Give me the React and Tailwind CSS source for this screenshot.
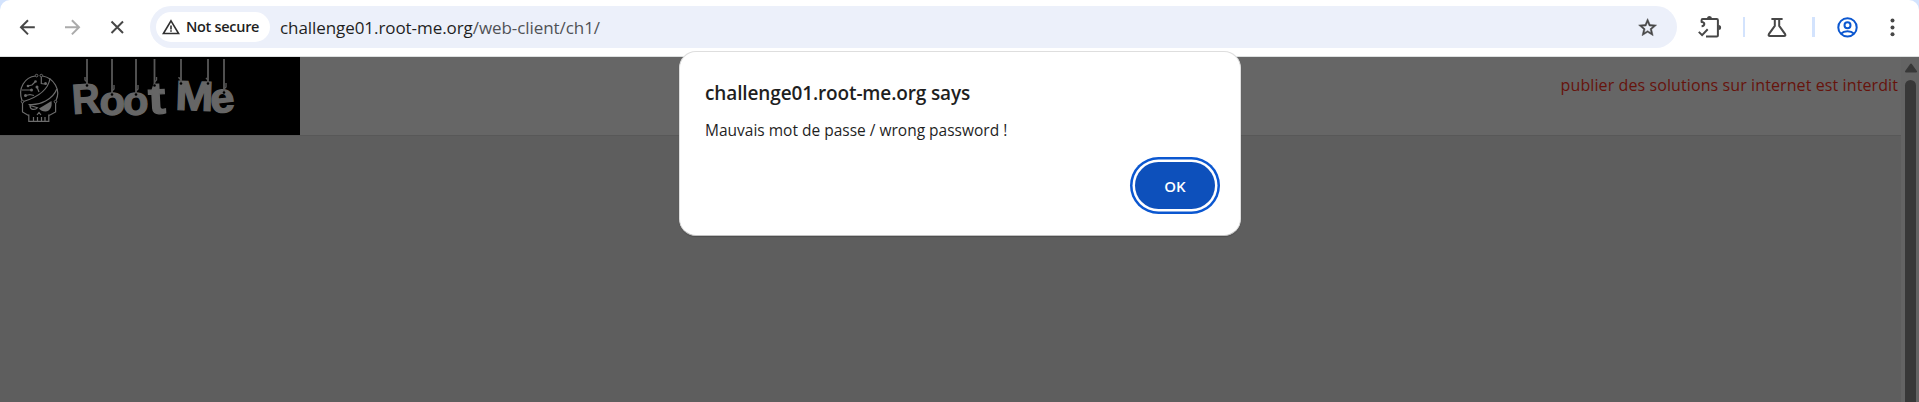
import React from "react";

const ink = "#474747";

function BackIcon() {
  return (
    <svg className="size-6" viewBox="0 0 24 24" fill="none" stroke={ink} strokeWidth="2">
      <path d="M19.8 12.3H6M13 5.200L6 12.300l7 7.100" />
    </svg>
  );
}

function ForwardIcon() {
  return (
    <svg className="size-6" viewBox="0 0 24 24" fill="none" stroke="#ababab" strokeWidth="2">
      <path d="M5 12.300h13.800M11.900 5.200l7.100 7.100-7.100 7.100" />
    </svg>
  );
}

function StopIcon() {
  return (
    <svg className="size-6" viewBox="0 0 24 24" fill="none" stroke={ink} strokeWidth="2">
      <path d="M6.500 6.500l11.500 11.500M18 6.500l-11.500 11.500" />
    </svg>
  );
}

function WarningIcon() {
  return (
    <svg className="h-5 w-[18px]" viewBox="0 0 18 20" fill="none" stroke="#303030" strokeWidth="1.600">
      <path d="M9 3.900L16.600 16.500H1.400z" />
      <path d="M9 8.400v4M9 13.300v1.500" />
    </svg>
  );
}

function StarIcon() {
  return (
    <svg className="size-6" viewBox="0 0 24 24">
      <path
        fill={ink}
        stroke={ink}
        strokeWidth=".5"
        d="M22 9.24l-7.19-.62L12 2 9.19 8.63 2 9.24l5.46 4.73L5.82 21 12 17.27 18.18 21l-1.63-7.03L22 9.24zM12 15.4l-3.76 2.27 1-4.28-3.32-2.88 4.38-.38L12 6.1l1.71 4.04 4.38.38-3.32 2.88 1 4.28L12 15.4z"
        transform="translate(.8 1.800) scale(.9)"
      />
    </svg>
  );
}

function ExtensionsIcon() {
  return (
    <svg className="h-6 w-6" viewBox="0 0 24 24" fill="none" stroke={ink} strokeWidth="2">
      <path d="M3.600 11.200c3.600-.2 3.600-4.100 0-4.300V5.200q0-1.100 1.100-1.100h14.100q1.100 0 1.100 1.100v15.300q0 1.100-1.100 1.100H8" strokeLinejoin="round" />
      <path d="M.8 16.900l3.300 3.200 5.600-5.800" />
      <path d="M9 3.400a2.500 2.500 0 0 1 5 0zM20.600 10.100a2.500 2.500 0 0 1 0 5z" fill={ink} stroke="none" />
    </svg>
  );
}

function LabsIcon() {
  return (
    <svg className="size-6" viewBox="0 0 24 24" fill="none" stroke={ink} strokeWidth="2">
      <path d="M6.400 4.100h11.200M9.800 4.500v6.400L3.900 19.100q-.8 2 1 2h14.200q1.800 0 1-2l-5.900-8.200V4.500" />
    </svg>
  );
}

function ProfileIcon() {
  return (
    <svg className="size-6" viewBox="0 0 24 24" fill="none" stroke="#0b57d0" strokeWidth="2">
      <circle cx="12.500" cy="12.400" r="9.200" />
      <circle cx="12.500" cy="10.300" r="3" />
      <path d="M5.900 18.700c3.400-3.400 9.800-3.400 13.200 0" />
    </svg>
  );
}

function MenuIcon() {
  return (
    <svg className="size-6" viewBox="0 0 24 24" fill={ink}>
      <circle cx="12.500" cy="5.500" r="2" />
      <circle cx="12.500" cy="12.400" r="2" />
      <circle cx="12.500" cy="19.300" r="2" />
    </svg>
  );
}

const strings = [
  [87, 82, 79],
  [112, 91, 87],
  [136, 91, 87],
  [154.5, 82, 79],
  [181, 80, 79],
  [208, 80, 80],
  [224, 89, 85],
];

// glyph, left, baseline, font size, rotation, horizontal stretch
const letters = [
  ["R", 73, 114, 42, -4, 0.92],
  ["o", 99.5, 115, 41, 0, 1.02],
  ["o", 123, 115, 41, 0, 1.02],
  ["t", 149, 114, 45, -3, 1.15],
  ["M", 175, 109.5, 41.5, 2, 1.1],
  ["e", 211.5, 113.5, 42, -6, 1.04],
];

function Logo() {
  return (
    <svg className="h-[78px] w-[300px] bg-black" viewBox="0 57 300 78">
      <g fill="#666" stroke="#666" strokeWidth="1.300" fontFamily="Liberation Sans, sans-serif" fontWeight="700">
        {letters.map(([c, x, y, size, r, sx]) => (
          <text key={x} fontSize={size} transform={`translate(${x} ${y}) rotate(${r}) scale(${sx} 1)`}>
            {c}
          </text>
        ))}
      </g>
      <g stroke="#585858" strokeWidth="1.800" fill="none">
        {strings.map(([x, y]) => (
          <path key={x} d={`M${x} 59V${y + 2}`} />
        ))}
      </g>
      <g stroke="#585858" strokeWidth="1.400" fill="none">
        {strings.map(([x, y, k], i) => {
          const side = [0, 3, 4, 5].includes(i) ? -1 : 1;
          const right = i === 3 ? 1 : side;
          return <path key={x} d={`M${x} ${y}l${right * 2} ${-2}v${k - y}`} />;
        })}
      </g>
      <g fill="#000">
        {strings.map(([x, y]) => (
          <circle key={x} cx={x} cy={y + 3.5} r="1.300" />
        ))}
      </g>
      <g fill="none" stroke="#6c6c6c" strokeWidth="1.200">
        <path d="M22 100.500C17.500 88 25 77 35.500 76M42.500 76C54 78 61 90 56 100.500" />
        <path d="M23.500 101.500C35 98 48 91 50 78.500" />
        <path d="M28.500 104.500C40 106 53 99 56.800 89" />
        <path d="M22.500 103v9l5.500 3.200h.8V121.300h20V115.200h.8l6-3.200V103" />
        <path d="M33.500 121v-4M37.500 121v-4M41.500 121v-4M45 121v-4M37 115l2-2.500 2 2.500" />
        <path d="M30 105.500c0 4.500 5 5 7.500 2.200zM27.500 86l4.500-1 3-3M22 90h9M26 95.500l4-1 4 1M37 87l2 5M41.300 77v6.500l3 .5" />
      </g>
      <g fill="#6c6c6c">
        <path d="M39 108.500L51.500 101c1 6-2 10.500-6 10.500-3 0-5-1-6.500-3z" />
        <circle cx="28" cy="86" r="1.300" />
        <circle cx="35.500" cy="81.500" r="1.300" />
        <circle cx="31.500" cy="90" r="1.500" />
        <circle cx="25.500" cy="95.500" r="1.500" />
        <circle cx="37" cy="87" r="1.500" />
        <circle cx="45.500" cy="83.500" r="1.500" />
      </g>
      <g fill="#000" stroke="#6c6c6c" strokeWidth="1">
        <circle cx="36.600" cy="75.600" r="1.300" />
        <circle cx="41.300" cy="75.600" r="1.300" />
        <circle cx="22.500" cy="101.700" r="1.300" />
        <circle cx="55.500" cy="101.700" r="1.300" />
      </g>
    </svg>
  );
}

function Toolbar() {
  return (
    <div className="flex h-14 items-start bg-[#d3e3fd]">
      <div className="flex h-14 w-full items-center rounded-t-[10px] bg-white pb-0.5">
        <div className="flex w-[150px] shrink-0 items-center pl-[15px]">
          <BackIcon />
          <div className="ml-[21px]"><ForwardIcon /></div>
          <div className="ml-[21px]"><StopIcon /></div>
        </div>
        <div className="flex h-[42px] w-[1527px] shrink-0 items-center rounded-full bg-[#ecf0fa] pl-1.5">
          <div className="flex h-[30px] w-[114px] items-center rounded-full bg-white pl-1.5">
            <WarningIcon />
            <span className="ml-[6px] text-[14.500px] font-semibold tracking-[-0.300px] whitespace-nowrap text-[#1f1f1f]">Not secure</span>
          </div>
          <div className="ml-[10px] flex-1 pt-0.5 text-[17px] tracking-[-0.070px] whitespace-nowrap text-[#1f1f1f]">
            <span>challenge01.root-me.org</span>
            <span className="text-[#505256]">/web-client/ch1/</span>
          </div>
          <div className="mr-[17px]"><StarIcon /></div>
        </div>
        <div className="flex flex-1 items-center pl-[21px]">
          <ExtensionsIcon />
          <div className="ml-[21px] h-5 w-0.5 bg-[#d3e3fd]" />
          <div className="ml-[20px]"><LabsIcon /></div>
          <div className="ml-[23px] h-5 w-[3px] bg-[#d3e3fd]" />
          <div className="ml-[20px]"><ProfileIcon /></div>
          <div className="ml-[21px]"><MenuIcon /></div>
        </div>
      </div>
    </div>
  );
}

function Dialog() {
  return (
    <div className="absolute top-[51px] left-[679px] flex h-[185px] w-[562px] flex-col rounded-[17px] border border-[#dedede] border-b-[#c0c0c0] bg-white px-[25px] shadow-[0_1px_1px_#00000030]">
      <h1 className="mt-[29px] text-[19px] leading-6 font-semibold tracking-[-0.130px] whitespace-nowrap text-[#1f1f1f]">
        challenge01.root-me.org says
      </h1>
      <p className="mt-[15px] text-[15.500px] leading-5 whitespace-nowrap text-[#1f1f1f]">
        Mauvais mot de passe / wrong password !
      </p>
      <button className="mt-[22px] h-[47px] w-20 self-end rounded-full bg-[#0d50bb] pt-0.5 text-[15px] font-semibold text-white ring-[2.500px] ring-[#0b57d0] ring-offset-[2.500px] ring-offset-white">
        OK
      </button>
    </div>
  );
}

export default function App() {
  return (
    <div className="relative flex h-[402px] w-[1919px] flex-col overflow-hidden bg-[#5e5e5e] font-['Open_Sans','Noto_Sans',sans-serif]">
      <Toolbar />
      <div className="h-px shrink-0 bg-[#dde0e0]" />
      <div className="flex flex-1">
        <main className="w-[1901px]">
          <header className="flex h-[79px] justify-between border-b border-[#585858] bg-[#666666]">
            <Logo />
            <p className="mt-[16px] mr-[3px] text-[16px] leading-6 tracking-[0.100px] whitespace-nowrap text-[#66130c]">
              publier des solutions sur internet est interdit
            </p>
          </header>
        </main>
        <aside className="flex w-[18px] flex-col items-center bg-[#646464] pt-[6px] pl-px">
          <svg className="h-[10px] w-3" viewBox="0 0 12 10" fill="#383838">
            <path d="M6 1.500L11 8.500H1z" stroke="#383838" strokeWidth="2" strokeLinejoin="round" />
          </svg>
          <div className="mt-[7px] w-[11px] flex-1 rounded-t-full bg-[#383838]" />
        </aside>
      </div>
      <Dialog />
    </div>
  );
}
